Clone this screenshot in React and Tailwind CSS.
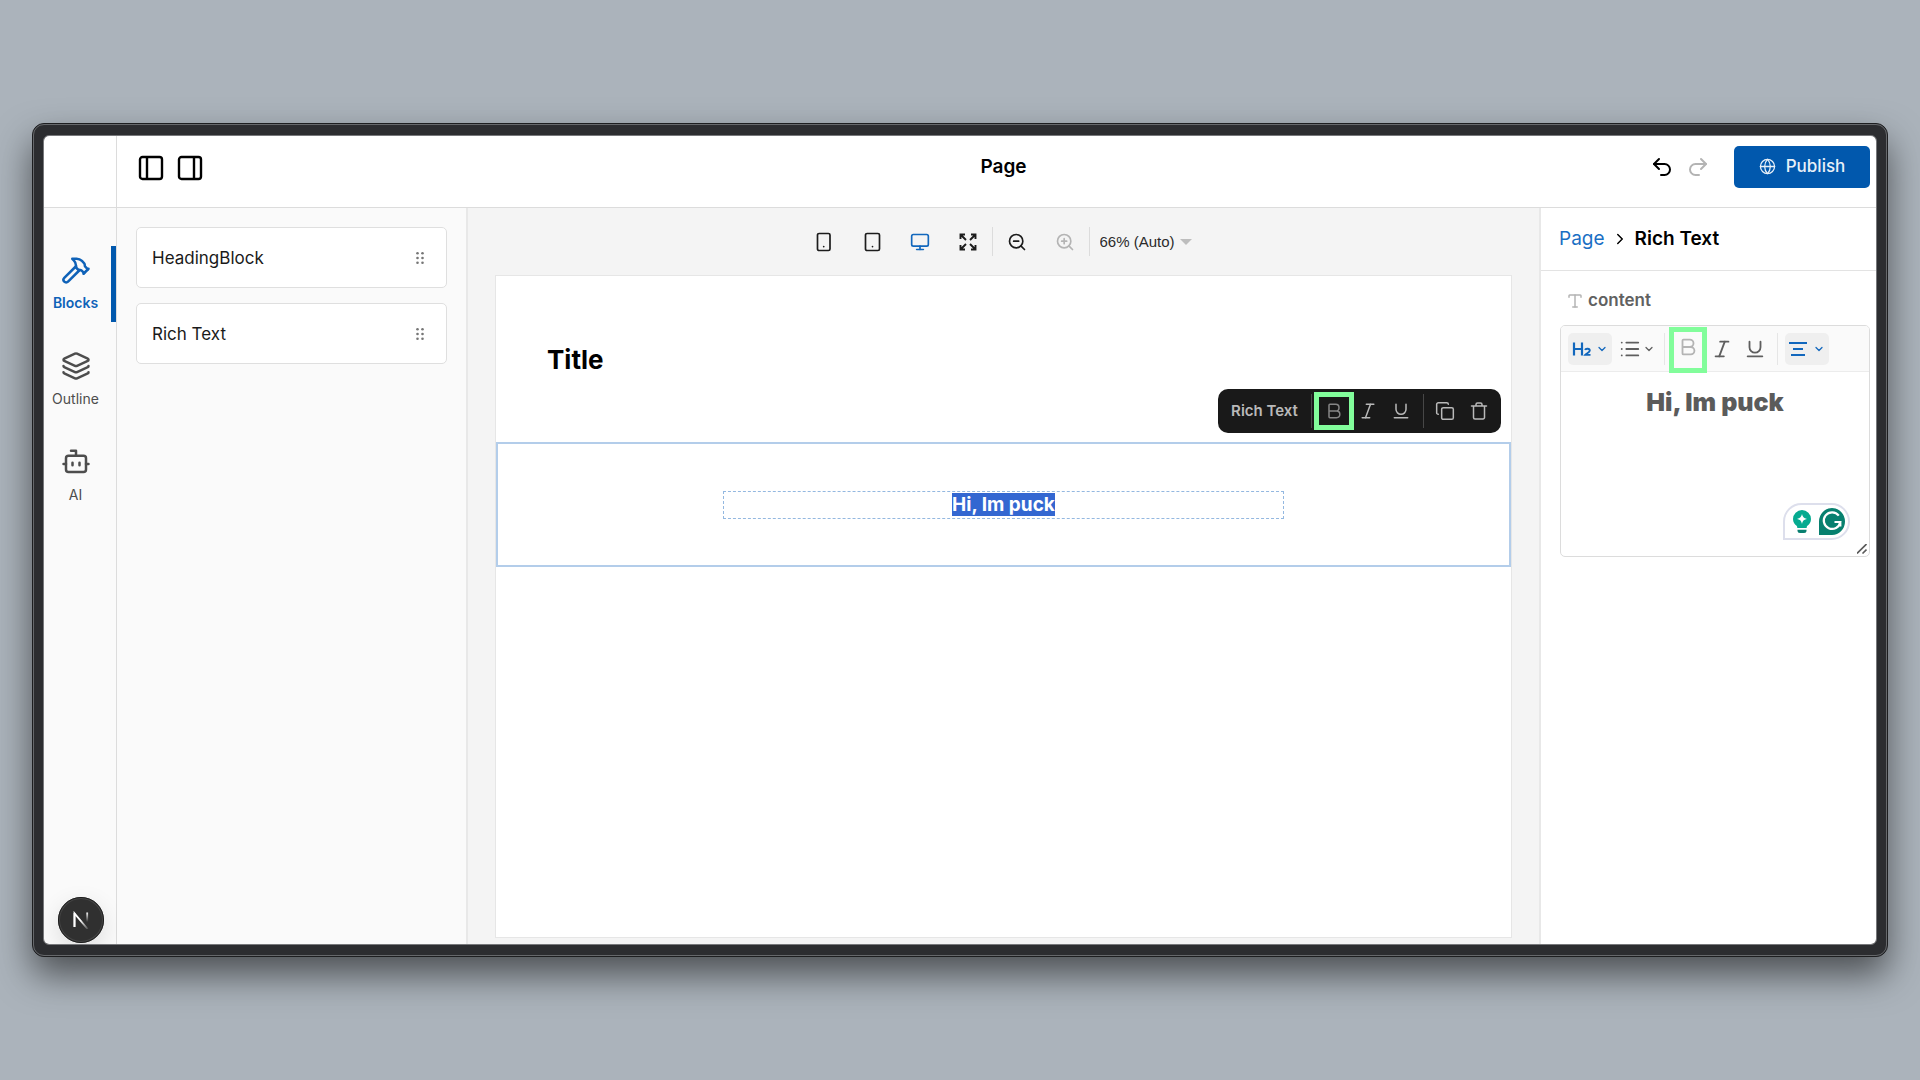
import React, { useState } from 'react';
import {
    Hammer,
    Layers,
    Monitor,
    ZoomIn,
    ZoomOut,
    Globe,
    Undo2,
    Redo2,
    ChevronRight,
    ChevronDown,
    Bold,
    Italic,
    Underline,
    Copy,
    List,
    Type,
} from 'lucide-react';

const PanelIcon = ({ side }) => (
    <svg viewBox="0 0 26 26" className="w-[26px] h-[26px]" fill="none" stroke="currentColor" strokeWidth="2.4">
        <rect x="2" y="2" width="22" height="22" rx="2.5" />
        <path d={side === 'left' ? 'M9 2v22' : 'M17 2v22'} />
    </svg>
);

const BotIcon = () => (
    <svg viewBox="0 0 24 24" className="w-[30px] h-[30px]" fill="none" stroke="currentColor" strokeWidth="2" strokeLinecap="round" strokeLinejoin="round">
        <path d="M12 7V3H8" />
        <rect x="4" y="7" width="16" height="13" rx="2" />
        <path d="M2 13.5h2M20 13.5h2M9.2 12.5v2M14.8 12.5v2" />
    </svg>
);

const DeviceIcon = ({ wide }) => (
    <svg viewBox="0 0 20 20" className="w-5 h-5" fill="none" stroke="currentColor" strokeWidth="1.7" strokeLinecap="round">
        <rect x="3.5" y="1.500" width={wide ? 14 : 12.5} height="17" rx="1.6" />
        <path d={wide ? 'M10.500 14.600h.01' : 'M9.700 14.600h.01'} />
    </svg>
);

const ExpandIcon = () => (
    <svg viewBox="0 0 20 20" className="w-5 h-5" fill="none" stroke="currentColor" strokeWidth="1.9">
        <path d="M7 2.5H2.5V7M2.5 2.5 8 8M13 2.5h4.500V7M17.500 2.500 12 8M7 17.500H2.500V13M2.500 17.500 8 12M13 17.500h4.500V13M17.500 17.500 12 12" />
    </svg>
);

const DragIcon = () => (
    <svg viewBox="0 0 8 12" className="w-2 h-3" fill="currentColor">
        {[1.3, 6, 10.7].map((y) => (
            <g key={y}>
                <circle cx="1.5" cy={y} r="1.3" />
                <circle cx="6.5" cy={y} r="1.3" />
            </g>
        ))}
    </svg>
);

const TrashIcon = () => (
    <svg viewBox="0 0 20 20" className="w-5 h-5" fill="none" stroke="currentColor" strokeWidth="1.5" strokeLinecap="round" strokeLinejoin="round">
        <path d="M2.500 5h15M4.500 5v11.500a1.500 1.500 0 0 0 1.500 1.500h8a1.500 1.500 0 0 0 1.500-1.500V5M7 5V3.500A1.500 1.500 0 0 1 8.500 2h3A1.500 1.500 0 0 1 13 3.500V5" />
    </svg>
);

const HeadingIcon = () => (
    <svg viewBox="0 0 20 16" className="w-5 h-4" fill="none" stroke="currentColor" strokeWidth="2.2">
        <path d="M2 1.500v13M10 1.500v13M2 8h8" />
        <path d="M13 8.800c.6-1.500 4.800-1.600 4.800.8 0 1.900-3.300 2.700-4.600 4.300h5.300" strokeWidth="1.900" />
    </svg>
);

const AlignIcon = () => (
    <svg viewBox="0 0 18 16" className="w-[18px] h-4" fill="none" stroke="currentColor" strokeWidth="2">
        <path d="M0 2h18M4 8h10M2 14h14" />
    </svg>
);

const BulbIcon = () => (
    <svg viewBox="0 0 18 23" className="w-[18px] h-[23px]">
        <path d="M9 0a9 9 0 0 1 9 9c0 3.200-1.700 5.200-3.300 6.600-.8.700-1 1.400-1 2.400H4.300c0-1-.2-1.700-1-2.400C1.700 14.200 0 12.200 0 9a9 9 0 0 1 9-9Z" fill="#06ab90" />
        <path d="M9 3.800c.7 3.300 1.700 4.300 5 5.100-3.300.8-4.300 1.800-5 5.100-.7-3.300-1.700-4.300-5-5.100 3.300-.8 4.300-1.800 5-5.100Z" fill="#fff" />
        <path d="M4.500 19.700h9v.8a2.500 2.500 0 0 1-2.500 2.500H7a2.500 2.500 0 0 1-2.500-2.500Z" fill="#087f70" />
    </svg>
);

const GrammarIcon = () => (
    <svg viewBox="0 0 26 27" className="w-[26px] h-[27px]" fill="none">
        <path d="M13 0a13 13.500 0 0 1 0 27H0V13.500A13 13.500 0 0 1 13 0Z" fill="#07806f" />
        <path d="M19.800 7.700A8.300 8.300 0 1 0 21.300 14h-5.800M21.300 14v4.500" stroke="#fff" strokeWidth="2.200" />
    </svg>
);

const NextBadge = () => (
    <button
        aria-label="Open developer tools"
        className="flex items-center justify-center w-[46px] h-[46px] rounded-full bg-[#303030] border-2 border-[#454545] outline outline-1 -outline-offset-1 outline-[#1c1c1c] shadow-[0_8px_24px_rgba(0,0,0,0.12)]"
    >
        <svg viewBox="0 0 18 18" className="w-[18px] h-[18px]" fill="none" strokeWidth="1.800">
            <defs>
                <linearGradient id="diag" x1="9" y1="9" x2="16" y2="18" gradientUnits="userSpaceOnUse">
                    <stop stopColor="#fff" />
                    <stop offset="1" stopColor="#fff" stopOpacity="0.15" />
                </linearGradient>
                <linearGradient id="stem" x1="15" y1="1" x2="15" y2="11" gradientUnits="userSpaceOnUse">
                    <stop stopColor="#fff" />
                    <stop offset="1" stopColor="#fff" stopOpacity="0" />
                </linearGradient>
            </defs>
            <path d="M2.500 16V2.300L15.600 18" stroke="url(#diag)" />
            <path d="M2.500 16V2" stroke="#fff" />
            <path d="M15.200 1.500V11" stroke="url(#stem)" />
        </svg>
    </button>
);

const navItems = [
    { id: 'blocks', label: 'Blocks', icon: <Hammer size={30} /> },
    { id: 'outline', label: 'Outline', icon: <Layers size={30} /> },
    { id: 'ai', label: 'AI', icon: <BotIcon /> },
];

const blocks = ['HeadingBlock', 'Rich Text'];

const Header = () => (
    <header className="flex shrink-0 h-[72px] bg-white border-b border-[#dcdcdc]">
        <div className="w-[73px] shrink-0 border-r border-[#dcdcdc]" />
        <div className="flex flex-1 items-center pb-2.5">
            <div className="flex items-center gap-[13px] w-[351px] pl-[21px] pt-0.5">
                <button aria-label="Toggle left sidebar"><PanelIcon side="left" /></button>
                <button aria-label="Toggle right sidebar"><PanelIcon side="right" /></button>
            </div>
            <h1 className="flex-1 text-center text-[19px] leading-6 font-semibold">Page</h1>
            <div className="flex items-center justify-end w-[337px] pr-1.5">
                <button aria-label="Undo" className="mr-3"><Undo2 size={24} /></button>
                <button aria-label="Redo" className="mr-6 text-[#b4b4b4]" disabled><Redo2 size={24} /></button>
                <button className="flex items-center justify-center gap-2.5 w-[136px] h-[42px] rounded-[5px] bg-[#0158ad] text-[#e8f0f8] text-[17px] font-medium">
                    <Globe size={17} strokeWidth={1.8} />
                    Publish
                </button>
            </div>
        </div>
    </header>
);

const SideNav = ({ active, onSelect }) => (
    <nav className="flex flex-col justify-between w-[73px] shrink-0 bg-[#fafafa] border-r border-[#dcdcdc] pt-[38px]">
        <div className="flex flex-col gap-5">
            {navItems.map((item) => (
                <button
                    key={item.id}
                    onClick={() => onSelect(item.id)}
                    className={`flex flex-col items-center justify-center gap-2 h-[76px] pr-1 text-[14px] leading-5 ${
                        active === item.id
                            ? 'border-r-[5px] border-[#0158ad] text-[#0f62b8] font-semibold'
                            : 'border-r-[5px] border-transparent text-[#4d4d4d]'
                    }`}
                >
                    {item.icon}
                    {item.label}
                </button>
            ))}
        </div>
        <div className="pl-3.5 pb-px">
            <NextBadge />
        </div>
    </nav>
);

const BlockList = () => (
    <aside className="flex flex-col gap-[15px] w-[351px] shrink-0 bg-[#fafafa] border-r-2 border-[#e8e8e8] pt-[19px] pl-[19px] pr-[19px]">
        {blocks.map((name) => (
            <div
                key={name}
                className="flex items-center justify-between h-[61px] pl-[15px] pr-[22px] bg-white border border-[#dfdfdf] rounded-[5px] text-[17px] text-[#1a1a1a]"
            >
                <span className="pt-0.5">{name}</span>
                <span className="text-[#767676]"><DragIcon /></span>
            </div>
        ))}
    </aside>
);

const ViewportBar = () => (
    <div className="flex items-center justify-center h-[67px] text-[#1c1c1c]">
        <button aria-label="Small viewport" className="flex justify-center w-12"><DeviceIcon /></button>
        <button aria-label="Medium viewport" className="flex justify-center w-12"><DeviceIcon wide /></button>
        <button aria-label="Large viewport" className="flex justify-center w-12 text-[#1267bd]"><Monitor size={20} /></button>
        <button aria-label="Full width" className="flex justify-center w-12"><ExpandIcon /></button>
        <span className="w-px h-[29px] bg-[#dcdcdc]" />
        <button aria-label="Zoom out" className="flex justify-center w-12"><ZoomOut size={20} /></button>
        <button aria-label="Zoom in" className="flex justify-center w-12 text-[#b4b4b4]" disabled><ZoomIn size={20} /></button>
        <span className="w-px h-[29px] bg-[#dcdcdc]" />
        <div className="relative ml-2.5">
            <select aria-label="Zoom level" className="appearance-none bg-transparent w-[108px] font-['Liberation_Sans',Arial,sans-serif] text-[15px] text-[#2b2b2b]">
                <option>66% (Auto)</option>
            </select>
            <svg viewBox="0 0 12 6" className="absolute right-4 top-2.5 w-3 h-1.5 pointer-events-none" fill="#bdbdbd">
                <path d="M0 0h12L6 6Z" />
            </svg>
        </div>
    </div>
);

const ActionBar = () => (
    <div className="absolute right-2 -top-[55px] flex items-center h-11 w-[283px] rounded-[10px] bg-[#191919] text-[#b9b9b9]">
        <span className="w-[93px] text-center text-[15px] font-semibold">Rich Text</span>
        <span className="w-px h-[34px] bg-[#474747]" />
        <button aria-label="Bold" className="flex items-center justify-center w-10 h-[38px] ml-0.5 border-[5px] border-[#82fd9b] text-[#858585]">
            <Bold size={20} strokeWidth={1.8} />
        </button>
        <button aria-label="Italic" className="flex justify-center w-7"><Italic size={20} strokeWidth={1.8} /></button>
        <button aria-label="Underline" className="flex justify-center w-[38px]"><Underline size={20} strokeWidth={1.8} /></button>
        <span className="w-px h-[34px] ml-[3px] bg-[#474747]" />
        <button aria-label="Duplicate" className="flex justify-center w-9 ml-[3px]"><Copy size={20} strokeWidth={1.8} /></button>
        <button aria-label="Delete" className="flex justify-center w-8"><TrashIcon /></button>
    </div>
);

const Canvas = () => (
    <main className="flex flex-col flex-1 min-w-0 px-[27px] pb-1.5 bg-[#f4f4f4]">
        <ViewportBar />
        <div className="flex-1 bg-white border border-[#e6e6e6]">
            <div className="flex items-center h-[166px] px-[51px] pt-0.5">
                <h2 className="text-[26px] leading-8 font-bold">Title</h2>
            </div>
            <div className="relative flex items-center justify-center h-[125px] border-2 border-[#b3cdea]">
                <ActionBar />
                <div className="flex items-center justify-center w-[561px] h-7 border border-dashed border-[#94b8e0]">
                    <h3 className="bg-[#3367d1] text-white text-[19px] leading-[23px] font-bold">Hi, Im puck</h3>
                </div>
            </div>
        </div>
    </main>
);

const Editor = () => {
    const [value, setValue] = useState('Hi, Im puck');

    return (
        <div className="relative h-[232px] border border-[#dcdcdc] rounded-[5px] overflow-hidden">
            <div className="flex items-center h-[46px] pl-[7px] bg-[#fafafa] border-b border-[#ececec] text-[#5e5e5e]">
                <button aria-label="Heading level" className="flex items-center justify-center gap-1 w-11 h-8 rounded-[5px] bg-[#efefef] text-[#1267bd]">
                    <HeadingIcon />
                    <ChevronDown size={12} strokeWidth={2.5} />
                </button>
                <button aria-label="List type" className="flex items-center gap-0.5 ml-[7px]">
                    <List size={22} />
                    <ChevronDown size={12} strokeWidth={2.5} />
                </button>
                <span className="w-px h-8 ml-[9px] bg-[#e6e6e6]" />
                <button aria-label="Bold" className="flex items-start justify-center w-[38px] h-[46px] mt-[3px] ml-1 pt-1 border-[5px] border-[#82fd9b] text-[#b4b4b4]">
                    <Bold size={22} />
                </button>
                <button aria-label="Italic" className="flex justify-center w-[30px]"><Italic size={22} /></button>
                <button aria-label="Underline" className="flex justify-center w-9"><Underline size={22} /></button>
                <span className="w-px h-8 ml-1 bg-[#e6e6e6]" />
                <button aria-label="Text alignment" className="flex items-center justify-center gap-1.5 w-11 h-8 ml-[7px] rounded-[5px] bg-[#efefef] text-[#1267bd]">
                    <AlignIcon />
                    <ChevronDown size={12} strokeWidth={2.5} />
                </button>
            </div>
            <textarea
                id="content"
                value={value}
                onChange={(e) => setValue(e.target.value)}
                className="block w-full h-[184px] pt-3.5 resize-none outline-none text-center text-[25px] leading-8 font-black text-[#5b5b5b]"
            />
            <div className="absolute right-[19px] bottom-4 flex items-center gap-2 w-[67px] h-[37px] pl-2 bg-white border-2 border-[#dddfec] rounded-full rounded-bl-none">
                <BulbIcon />
                <GrammarIcon />
            </div>
            <svg viewBox="0 0 10 10" className="absolute right-0.5 bottom-0.5 w-2.5 h-2.5" stroke="#5b5b5b" strokeWidth="1.6">
                <path d="M0 9.500 9.500 0M5.500 9.500l4-4" />
            </svg>
        </div>
    );
};

const FieldsPanel = () => (
    <aside className="w-[337px] shrink-0 bg-white border-l-2 border-[#e8e8e8]">
        <div className="flex items-center h-[63px] pl-[18px] border-b border-[#e3e3e3] text-[19px]">
            <a href="#page" className="text-[#1a6fc4]">Page</a>
            <ChevronRight size={18} className="mx-1.5" />
            <span className="font-semibold">Rich Text</span>
        </div>
        <div className="pt-[18px] pl-[19px] pr-1.5">
            <label htmlFor="content" className="flex items-center gap-1 h-6 mb-3 pl-1.5 text-[17px] font-semibold text-[#616161]">
                <Type size={18} className="text-[#b4b4b4]" />
                content
            </label>
            <Editor />
        </div>
    </aside>
);

export default function App() {
    const [active, setActive] = useState('blocks');

    return (
        <div className="flex flex-col min-h-screen px-8 py-[123px] bg-[#abb3bb] text-black font-['Inter',sans-serif]">
            <div className="flex flex-col flex-1 rounded-[12px] border border-[#1d1e20] bg-[#2c2d30] shadow-[0_18px_36px_rgba(0,0,0,0.55)]">
                <div className="flex flex-col flex-1 px-[9px] py-2.5 rounded-[11px] border border-[#66686b]">
                    <div className="flex flex-col flex-1 border border-[#77787b] rounded-md overflow-hidden">
                        <Header />
                        <div className="flex flex-1">
                            <SideNav active={active} onSelect={setActive} />
                            <BlockList />
                            <Canvas />
                            <FieldsPanel />
                        </div>
                    </div>
                </div>
            </div>
        </div>
    );
}
